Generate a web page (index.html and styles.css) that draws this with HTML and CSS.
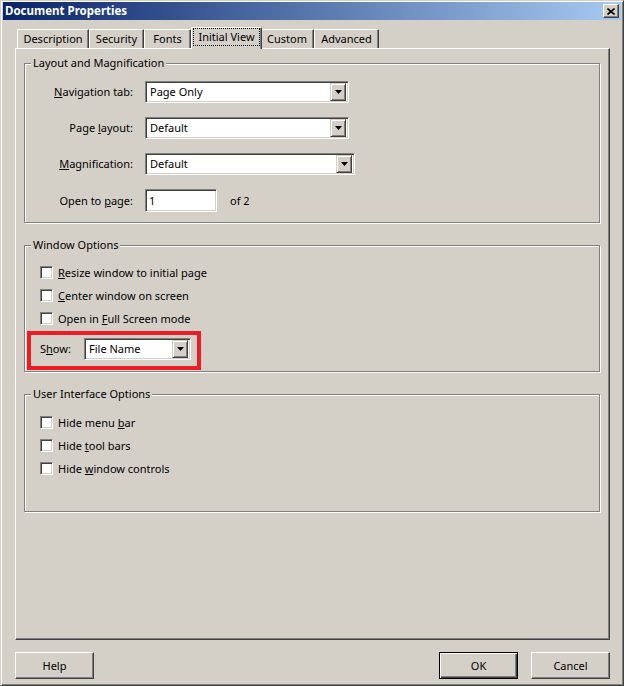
FILE: index.html
```html
<!DOCTYPE html>
<html>
<head>
<meta charset="utf-8">
<title>Document Properties</title>
<link rel="stylesheet" href="styles.css">
</head>
<body>
<div class="window">
  <div class="titlebar">
    <span class="title">Document Properties</span>
    <span class="close"><svg width="8" height="7" viewBox="0 0 8 7"><path d="M0.5 0.5 L7.5 6.5 M7.5 0.5 L0.5 6.5" stroke="#000" stroke-width="1.6" fill="none"/></svg></span>
  </div>
  <div class="main">
    <div class="tabs">
      <div class="tab t-desc">Description</div>
      <div class="tab t-sec">Security</div>
      <div class="tab t-fonts">Fonts</div>
      <div class="tab active"><span class="focus">Initial View</span></div>
      <div class="tab t-custom">Custom</div>
      <div class="tab t-adv">Advanced</div>
    </div>
    <div class="panel">
      <div class="group g1">
        <div class="legend">Layout and Magnification</div>
        <div class="rows">
          <div class="row">
            <span class="lbl"><u>N</u>avigation tab:</span>
            <div class="select w204"><span class="val">Page Only</span><span class="drop"><svg width="7" height="4" viewBox="0 0 7 4"><polygon points="0,0 7,0 3.5,4" fill="#000"/></svg></span></div>
          </div>
          <div class="row">
            <span class="lbl">Page <u>l</u>ayout:</span>
            <div class="select w204"><span class="val">Default</span><span class="drop"><svg width="7" height="4" viewBox="0 0 7 4"><polygon points="0,0 7,0 3.5,4" fill="#000"/></svg></span></div>
          </div>
          <div class="row">
            <span class="lbl"><u>M</u>agnification:</span>
            <div class="select w210"><span class="val">Default</span><span class="drop"><svg width="7" height="4" viewBox="0 0 7 4"><polygon points="0,0 7,0 3.5,4" fill="#000"/></svg></span></div>
          </div>
          <div class="row row-input">
            <span class="lbl">Open to <u>p</u>age:</span>
            <div class="input">1</div>
            <span class="of">of 2</span>
          </div>
        </div>
      </div>

      <div class="group g2">
        <div class="legend">Window Options</div>
        <div class="checks">
          <div class="check"><span class="box"></span><span><u>R</u>esize window to initial page</span></div>
          <div class="check"><span class="box"></span><span><u>C</u>enter window on screen</span></div>
          <div class="check"><span class="box"></span><span>Open in <u>F</u>ull Screen mode</span></div>
        </div>
        <div class="highlight">
          <span class="show-lbl">S<u>h</u>ow:</span>
          <div class="select w107"><span class="val">File Name</span><span class="drop"><svg width="7" height="4" viewBox="0 0 7 4"><polygon points="0,0 7,0 3.5,4" fill="#000"/></svg></span></div>
        </div>
      </div>

      <div class="group g3">
        <div class="legend">User Interface Options</div>
        <div class="checks">
          <div class="check"><span class="box"></span><span>Hide menu <u>b</u>ar</span></div>
          <div class="check"><span class="box"></span><span>Hide <u>t</u>ool bars</span></div>
          <div class="check"><span class="box"></span><span>Hide <u>w</u>indow controls</span></div>
        </div>
      </div>
    </div>
    <div class="buttons">
      <div class="btn">Help</div>
      <div class="btn default">OK</div>
      <div class="btn">Cancel</div>
    </div>
  </div>
</div>
</body>
</html>
```

FILE: styles.css
```css
html, body {
  margin: 0;
  padding: 0;
  background: #d4d0c8;
}
body {
  font-family: "Noto Sans", "Liberation Sans", sans-serif;
  font-size: 11px;
  color: #000;
}
u {
  text-decoration-thickness: 1px;
  text-underline-offset: 1px;
}

.window {
  width: 624px;
  height: 686px;
  box-sizing: border-box;
  border: 1px solid;
  border-color: #d4d0c8 #404040 #404040 #d4d0c8;
  box-shadow: inset 1px 1px #fff, inset -1px -1px #808080;
  padding: 1px 2px 2px 2px;
  background: #d4d0c8;
}

.titlebar {
  height: 18px;
  background: linear-gradient(to right, #0a246a, #a6caf0);
  display: flex;
  align-items: center;
  justify-content: space-between;
  padding: 0 2px;
}
.title {
  color: #fff;
  font-weight: bold;
  font-size: 11.5px;
  line-height: 14px;
}
.close {
  width: 16px;
  height: 14px;
  box-sizing: border-box;
  background: #d4d0c8;
  border: 1px solid;
  border-color: #fff #404040 #404040 #fff;
  box-shadow: inset -1px -1px #808080;
  display: flex;
  align-items: center;
  justify-content: center;
}
.close svg { display: block; }

.main {
  padding: 0 11px 0 12px;
}

.tabs {
  display: flex;
  align-items: flex-end;
  height: 29px;
  padding-left: 2px;
}
.tab {
  height: 19px;
  box-sizing: border-box;
  margin-bottom: 1px;
  border-top: 1px solid #fff;
  border-left: 1px solid #fff;
  border-right: 1px solid #404040;
  box-shadow: inset -1px 0 #808080;
  display: flex;
  align-items: center;
  justify-content: center;
  line-height: 14px;
  padding-bottom: 1px;
}
.t-desc { width: 72px; }
.t-sec { width: 55px; }
.t-fonts { width: 47px; }
.t-custom { width: 54px; }
.t-adv { width: 65px; }
.tab.active {
  width: 71px;
  height: 22px;
  margin-bottom: 0;
  margin-right: -2px;
  position: relative;
  z-index: 1;
  background: #d4d0c8;
  align-items: flex-start;
  padding: 0 1px;
}
.focus {
  display: block;
  width: 100%;
  box-sizing: border-box;
  height: 18px;
  line-height: 16px;
  border: 1px dotted #000;
  text-align: center;
}

.panel {
  height: 592px;
  box-sizing: border-box;
  border: 1px solid;
  border-color: #fff #404040 #404040 #fff;
  box-shadow: inset -1px -1px #808080;
  margin-top: -1px;
  padding: 14px 9px 0 8px;
}

.group {
  border: 1px solid #808080;
  box-shadow: 1px 1px #fff, inset 1px 1px #fff;
  box-sizing: border-box;
}
.g1 { height: 160px; }
.g2 { height: 127px; margin-top: 22px; }
.g3 { height: 118px; margin-top: 22px; }

.legend {
  width: max-content;
  height: 14px;
  line-height: 14px;
  margin: -8px 0 0 6px;
  padding: 0 2px;
  background: #d4d0c8;
}

.rows {
  padding-top: 11px;
  display: flex;
  flex-direction: column;
  gap: 14px;
}
.row {
  display: flex;
  align-items: center;
  height: 22px;
}
.row-input { height: 23px; }
.lbl {
  width: 108px;
  text-align: right;
  margin-right: 12px;
  line-height: 14px;
}

.select {
  height: 22px;
  box-sizing: border-box;
  border: 1px solid;
  border-color: #808080 #fff #fff #808080;
  box-shadow: inset 1px 1px #404040, inset -1px -1px #d4d0c8;
  background: #fff;
  display: flex;
  align-items: center;
  padding: 2px;
}
.w204 { width: 204px; }
.w210 { width: 210px; }
.w107 { width: 107px; }
.val {
  padding-left: 2px;
  line-height: 14px;
}
.drop {
  margin-left: auto;
  width: 16px;
  height: 18px;
  box-sizing: border-box;
  background: #d4d0c8;
  border: 1px solid;
  border-color: #d4d0c8 #404040 #404040 #d4d0c8;
  box-shadow: inset 1px 1px #fff, inset -1px -1px #808080;
  display: flex;
  align-items: center;
  justify-content: center;
}
.drop svg { display: block; }

.input {
  width: 72px;
  height: 23px;
  box-sizing: border-box;
  border: 1px solid;
  border-color: #808080 #fff #fff #808080;
  box-shadow: inset 1px 1px #404040, inset -1px -1px #d4d0c8;
  background: #fff;
  padding: 0 3px;
  display: flex;
  align-items: center;
  line-height: 14px;
}
.of {
  margin-left: 13px;
  line-height: 14px;
}

.checks {
  padding-left: 15px;
}
.g2 .checks { margin-top: 9px; }
.g3 .checks { margin-top: 10px; }
.check {
  display: flex;
  align-items: center;
  height: 23px;
  line-height: 14px;
}
.box {
  width: 13px;
  height: 13px;
  box-sizing: border-box;
  background: #fff;
  border: 1px solid;
  border-color: #808080 #fff #fff #808080;
  box-shadow: inset 1px 1px #404040, inset -1px -1px #d4d0c8;
  margin-right: 5px;
  flex: none;
}

.highlight {
  width: max-content;
  margin: 1px 0 0 2px;
  border: 4px solid #ec1c24;
  padding: 3px 6px 6px 9px;
  display: flex;
  align-items: center;
}
.show-lbl {
  width: 44px;
  line-height: 14px;
}

.buttons {
  display: flex;
  margin-top: 12px;
  gap: 13px;
}
.btn {
  width: 79px;
  height: 27px;
  box-sizing: border-box;
  background: #d4d0c8;
  border: 1px solid;
  border-color: #fff #404040 #404040 #fff;
  box-shadow: inset -1px -1px #808080;
  display: flex;
  align-items: center;
  justify-content: center;
  line-height: 14px;
}
.btn.default {
  margin-left: auto;
  border-color: #000;
  box-shadow: inset 1px 1px #fff, inset -1px -1px #404040, inset -2px -2px #808080;
}
```
